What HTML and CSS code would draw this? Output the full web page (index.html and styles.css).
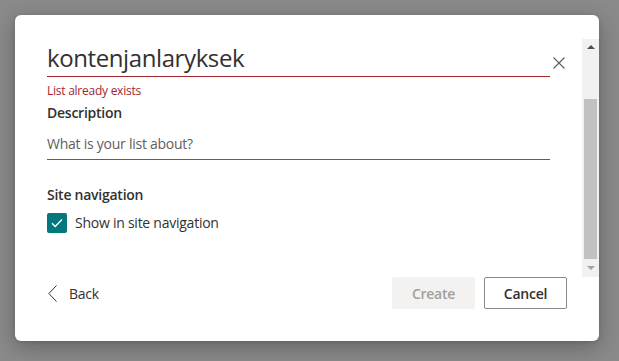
FILE: index.html
```html
<!DOCTYPE html>
<html lang="en">
<head>
    <meta charset="UTF-8">
    <meta name="viewport" content="width=device-width, initial-scale=1.0">
    <title>Create list</title>
    <link rel="stylesheet" href="styles.css">
</head>
<body>
    <div class="dialog">
        <div class="dialog-body">
            <div class="dialog-content">
                <div class="title-row">
                    <div class="title-field">
                        <div class="title-input">kontenjanlaryksek</div>
                    </div>
                    <button class="close-btn" aria-label="Close">
                        <svg width="12" height="12" viewBox="0 0 12 12"><path d="M0.5 0.5 L11.5 11.5 M11.5 0.5 L0.5 11.5" stroke="#605e5c" stroke-width="1.1" fill="none"/></svg>
                    </button>
                </div>
                <div class="error-text">List already exists</div>

                <label class="field-label">Description</label>
                <div class="text-field">What is your list about?</div>

                <div class="section-label">Site navigation</div>
                <div class="checkbox-row">
                    <span class="checkbox">
                        <svg width="12" height="10" viewBox="0 0 12 10"><path d="M1 5.2 L4.2 8.4 L11 1.6" stroke="#fff" stroke-width="1.4" fill="none"/></svg>
                    </span>
                    <span class="checkbox-label">Show in site navigation</span>
                </div>
            </div>
            <div class="scrollbar">
                <span class="arrow arrow-up"></span>
                <div class="track"><div class="thumb"></div></div>
                <span class="arrow arrow-down"></span>
            </div>
        </div>
        <div class="dialog-footer">
            <button class="back-btn">
                <svg width="9" height="17" viewBox="0 0 9 17"><path d="M8.5 0.5 L0.8 8.5 L8.5 16.5" stroke="#323130" stroke-width="1" fill="none"/></svg>
                <span>Back</span>
            </button>
            <div class="actions">
                <button class="btn btn-primary" disabled>Create</button>
                <button class="btn btn-default">Cancel</button>
            </div>
        </div>
    </div>
</body>
</html>
```

FILE: styles.css
```css
body {
    margin: 0;
    height: 361px;
    overflow: hidden;
    font-family: "Segoe UI", "Open Sans", "Noto Sans", sans-serif;
    letter-spacing: -0.25px;
    color: #323130;
    background-color: #8a8a8a;
    background-image: repeating-linear-gradient(to bottom, transparent 0, transparent 56px, #808080 56px, #808080 57px, transparent 57px, transparent 99px);
    background-size: 100% 43px;
    background-position: 0 14px;
    padding: 15px;
    box-sizing: border-box;
}
.dialog {
    width: 584px;
    height: 326px;
    background: #fff;
    border-radius: 6px;
    box-shadow: 0 6px 22px rgba(0, 0, 0, 0.28), 0 1px 4px rgba(0, 0, 0, 0.12);
    display: flex;
    flex-direction: column;
    padding-top: 24px;
    box-sizing: border-box;
}
.dialog-body {
    display: flex;
    height: 238px;
}
.dialog-content {
    flex: 1;
    padding: 0 32px 0 32px;
}
.title-row {
    display: flex;
    align-items: flex-start;
    margin-right: -18px;
}
.title-field {
    flex: 1;
    border-bottom: 1px solid #a4262c;
    height: 37px;
}
.title-input {
    font-size: 24px;
    letter-spacing: -0.4px;
    line-height: 32px;
    padding-top: 3px;
    font-weight: 400;
    color: #323130;
}
.close-btn {
    width: 18px;
    height: 18px;
    margin: 15px 0 0 0;
    padding: 0;
    border: none;
    background: none;
    display: flex;
    align-items: center;
    justify-content: center;
}
.error-text {
    font-size: 12px;
    line-height: 16px;
    color: #a4262c;
    margin-top: 6px;
}
.field-label, .section-label {
    display: block;
    font-size: 14px;
    font-weight: 600;
    line-height: 20px;
}
.field-label {
    margin-top: 4px;
}
.text-field {
    font-size: 14px;
    line-height: 20px;
    color: #605e5c;
    margin-top: 11px;
    padding-bottom: 5px;
    border-bottom: 1px solid #605e5c;
}
.section-label {
    margin-top: 25px;
}
.checkbox-row {
    display: flex;
    align-items: center;
    margin-top: 8px;
}
.checkbox {
    width: 20px;
    height: 20px;
    border-radius: 2px;
    background: #03787c;
    display: flex;
    align-items: center;
    justify-content: center;
    margin-right: 8px;
}
.checkbox-label {
    font-size: 14px;
    line-height: 20px;
}
.scrollbar {
    width: 17px;
    background: #f1f1f1;
    display: flex;
    flex-direction: column;
    align-items: center;
}
.arrow {
    width: 0;
    height: 0;
    border-left: 4px solid transparent;
    border-right: 4px solid transparent;
    margin: 7px 0;
}
.arrow-up {
    border-bottom: 4px solid #505050;
    margin-top: 6px;
}
.arrow-down {
    border-top: 4px solid #a3a3a3;
}
.track {
    flex: 1;
    width: 100%;
    display: flex;
    flex-direction: column;
    justify-content: flex-end;
    align-items: center;
}
.thumb {
    width: 13px;
    height: 160px;
    background: #c1c1c1;
}
.dialog-footer {
    display: flex;
    align-items: center;
    justify-content: space-between;
    padding: 0 32px 0 33px;
    height: 32px;
}
.back-btn {
    display: flex;
    align-items: center;
    gap: 12px;
    border: none;
    background: none;
    padding: 0;
    font-family: inherit;
    letter-spacing: inherit;
    font-size: 14px;
    color: #323130;
}
.actions {
    display: flex;
    gap: 9px;
}
.btn {
    width: 83px;
    height: 32px;
    border-radius: 2px;
    font-family: inherit;
    letter-spacing: inherit;
    font-size: 14px;
    font-weight: 600;
    box-sizing: border-box;
}
.btn-primary {
    background: #f3f2f1;
    color: #a19f9d;
    border: none;
}
.btn-default {
    background: #fff;
    color: #323130;
    border: 1px solid #8a8886;
}
```
